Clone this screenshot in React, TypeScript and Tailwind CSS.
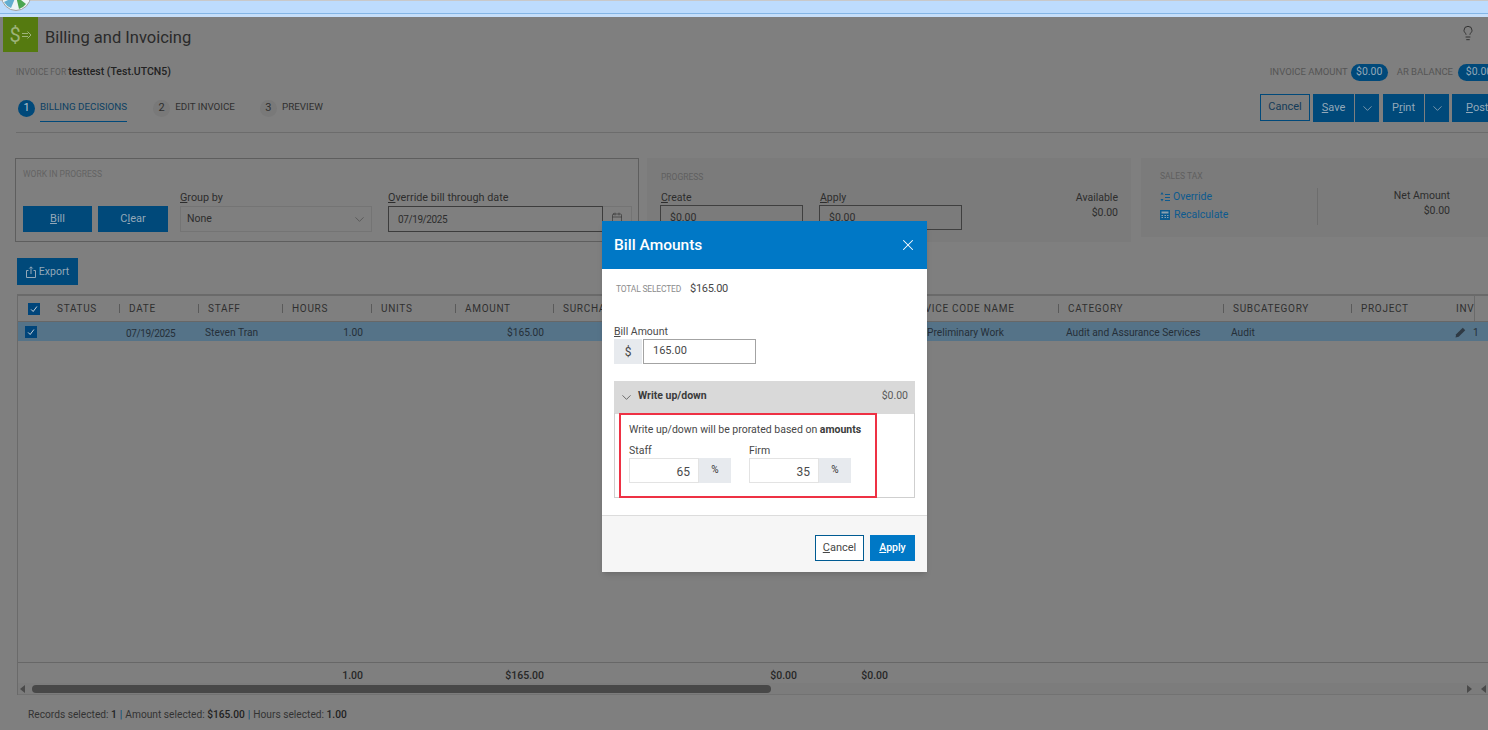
import { Calendar, ChevronDown, Lightbulb, X } from "lucide-react";

const COLS = [
  { label: "", w: "w-[30px]" },
  { label: "STATUS", w: "w-[71px]" },
  { label: "DATE", w: "w-[79px]" },
  { label: "STAFF", w: "w-[84px]" },
  { label: "HOURS", w: "w-[89px]" },
  { label: "UNITS", w: "w-[84px]" },
  { label: "AMOUNT", w: "w-[98px]" },
  { label: "SURCHARGE", w: "w-[110px]" },
  { label: "DISCOUNT", w: "w-[140px]" },
  { label: "WRITE UP", w: "w-[92px]" },
  { label: "SERVICE CODE NAME", w: "w-[163px]" },
  { label: "CATEGORY", w: "w-[165px]" },
  { label: "SUBCATEGORY", w: "w-[128px]" },
  { label: "PROJECT", w: "w-[96px]" },
  { label: "INV", w: "h-full w-[28px] overflow-hidden border-r border-[#6a6a6a]" },
];

function CheckBox() {
  return (
    <span className="flex h-[12px] w-[12px] items-center justify-center bg-[#00457a]">
      <svg viewBox="0 0 12 12" className="h-[10px] w-[10px]" fill="none" stroke="#c9d3da" strokeWidth="1.2">
        <path d="M2.5 6.5 5 9l4.5-6" />
      </svg>
    </span>
  );
}

function BlueButton({ children, className }: { children: React.ReactNode; className: string }) {
  return (
    <button className={`flex items-center justify-center bg-[#00497a] text-[11px] text-[#93a8b8] ${className}`}>
      {children}
    </button>
  );
}

function Step({ n, label, active }: { n: number; label: string; active?: boolean }) {
  return (
    <div className="flex items-center">
      <span
        className={`flex h-[17px] w-[17px] items-center justify-center rounded-full text-[11px] ${
          active ? "bg-[#00497a] text-[#b8c6d0]" : "bg-[#797979] text-[#2e2e2e]"
        }`}
      >
        {n}
      </span>
      <span
        className={`ml-[5px] flex h-[27px] items-center border-b pb-px text-[9.8px] ${
          active ? "border-[#00497a] text-[#0c3f63]" : "border-transparent text-[#2f2f2f]"
        }`}
      >
        {label}
      </span>
    </div>
  );
}

function PercentInput({ value }: { value: string }) {
  return (
    <div className="flex h-[25px]">
      <div className="flex w-[70px] items-center justify-end border border-[#e3e3e3] pr-[8px] pt-[2px] text-[12px] text-[#4a4a4a]">
        {value}
      </div>
      <div className="flex w-[32px] items-center justify-center bg-[#e7eaee] pb-[3px] text-[10px] text-[#333]">%</div>
    </div>
  );
}

function BillAmountsDialog() {
  return (
    <div className="absolute left-[602px] top-[221px] w-[325px] bg-white text-[#474747] shadow-md">
      <div className="flex h-[48px] items-center justify-between bg-[#0078c6] pl-[12px] pr-[10px] text-white">
        <span className="pt-[2px] text-[15.5px] font-medium">Bill Amounts</span>
        <X size={18} strokeWidth={1.4} />
      </div>
      <div className="px-[12px] pt-[13px]">
        <div className="flex h-[14px] items-center">
          <span className="ml-[2px] text-[8.5px] tracking-[-0.2px] text-[#8c8c8c]">TOTAL SELECTED</span>
          <span className="ml-[9px] text-[11px] tracking-[-0.3px]">$165.00</span>
        </div>
        <div className="mt-[29px] h-[14px] text-[10.5px] leading-[14px] text-[#4a4a4a]">
          <u>B</u>ill Amount
        </div>
        <div className="flex h-[25px]">
          <div className="flex w-[28px] items-center justify-center bg-[#e7eaee] text-[12px]">$</div>
          <div className="ml-[1px] flex w-[113px] items-center border border-[#a3a3a3] pl-[9px] text-[11px]">165.00</div>
        </div>
        <div className="mt-[17px] flex h-[33px] items-center bg-[#d9d9d9] pb-[3px] pl-[5px] pr-[7px] text-[10.5px]">
          <ChevronDown size={15} strokeWidth={1.2} className="mt-[3px]" />
          <span className="ml-[4px] font-bold text-[#3c3c3c]">Write up/down</span>
          <span className="ml-auto text-[#5a5a5a]">$0.00</span>
        </div>
        <div className="h-[85px] border border-t-0 border-[#cfcfcf]">
          <div className="-mt-px ml-[4px] h-[85px] w-[258px] border-2 border-[#ee3144] pl-[8px] pt-[8px] text-[10.5px]">
            <div className="h-[14px] leading-[14px]">
              Write up/down will be prorated based on <b className="text-[#3c3c3c]">amounts</b>
            </div>
            <div className="mt-[7px] flex gap-[18px]">
              <div>
                <div className="h-[14px] leading-[14px]">Staff</div>
                <PercentInput value="65" />
              </div>
              <div>
                <div className="h-[14px] leading-[14px]">Firm</div>
                <PercentInput value="35" />
              </div>
            </div>
          </div>
        </div>
      </div>
      <div className="mt-[17px] flex h-[57px] items-start justify-end gap-[6px] border-t border-[#dcdcdc] bg-[#f6f6f6] pr-[12px] pt-[19px]">
        <button className="flex h-[26px] w-[49px] items-center justify-center border border-[#005b92] bg-white text-[11px] text-[#474747]">
          <span><u>C</u>ancel</span>
        </button>
        <button className="flex h-[26px] w-[45px] items-center justify-center bg-[#0078c6] text-[10.5px] font-medium text-white">
          <span><u>A</u>pply</span>
        </button>
      </div>
    </div>
  );
}

export default function App() {
  return (
    <div className="relative h-[730px] w-[1488px] overflow-hidden bg-[#7f7f7f] font-['Roboto',sans-serif] text-[#2d2d2d]">
      {/* browser strip */}
      <div className="relative h-[17px] border-t border-[#c9c9c9] bg-[#bddcfd]">
        <div className="absolute bottom-[3px] left-0 right-0 h-px bg-[#84b6e6]" />
        <div className="absolute bottom-0 left-0 right-0 h-[3px] bg-[#c6dffa]" />
        <svg viewBox="0 0 30 30" className="absolute -top-[20px] left-px h-[30px] w-[30px]">
          <circle cx="15" cy="15" r="14.500" fill="#eef4f6" stroke="#a0a0a0" />
          <path d="M3 21 15 15l-5 12A14 14 0 0 1 3 21Z" fill="#63aed0" />
          <path d="m15 15 10 8a14 14 0 0 1-7 5Z" fill="#4ca650" />
        </svg>
      </div>

      <div className="w-[1510px]">
        {/* title */}
        <div className="flex h-[35px] pl-[3px] pr-[34px]">
          <div className="flex h-[35px] w-[35px] items-center justify-center bg-[#557a10] text-[#9db37a]">
            <span className="text-[20px] leading-none">$</span>
            <svg viewBox="0 0 10 8" className="ml-px h-[8px] w-[10px]" fill="none" stroke="currentColor">
              <path d="M0 2.500h6M0 5.500h6M5.500.5 9 4 5.500 7.500" />
            </svg>
          </div>
          <h1 className="ml-[7px] self-center pt-[7px] text-[16.5px] leading-none text-[#2a2a2a]">Billing and Invoicing</h1>
          <Lightbulb size={16} strokeWidth={1.4} className="ml-auto mt-[8px] text-[#2d2d2d]" />
        </div>

        {/* invoice for */}
        <div className="mt-[10px] flex h-[20px] items-center pl-[16px]">
          <span className="text-[8.500px] text-[#5a5a5a]">INVOICE FOR</span>
          <span className="ml-[2px] text-[10.500px] font-medium text-[#222]">testtest (Test.UTCN5)</span>
          <span className="ml-auto text-[9.500px] text-[#555]">INVOICE AMOUNT</span>
          <span className="ml-[3px] flex h-[17px] w-[37px] items-center justify-center rounded-full bg-[#00497a] text-[10.500px] text-[#93a8b8]">$0.00</span>
          <span className="ml-[9px] text-[9.500px] text-[#555]">AR BALANCE</span>
          <span className="ml-[5px] mr-[10px] flex h-[17px] w-[42px] items-center justify-center rounded-full bg-[#00497a] text-[10.500px] text-[#93a8b8]">$0.00</span>
        </div>

        {/* steps and actions */}
        <div className="mt-[12px] flex h-[28px] items-center pl-[18px]">
          <Step n={1} label="BILLING DECISIONS" active />
          <div className="ml-[26px]"><Step n={2} label="EDIT INVOICE" /></div>
          <div className="ml-[25px]"><Step n={3} label="PREVIEW" /></div>
          <div className="ml-auto flex h-[28px] items-stretch">
            <button className="mb-px w-[50px] border border-[#00497a] text-[11px] text-[#143b58]">Cancel</button>
            <BlueButton className="ml-[3px] w-[41px]"><span><u>S</u>ave</span></BlueButton>
            <BlueButton className="ml-px w-[24px]"><ChevronDown size={15} strokeWidth={1.3} /></BlueButton>
            <BlueButton className="ml-[4px] w-[41px]"><span>P<u>r</u>int</span></BlueButton>
            <BlueButton className="ml-px w-[24px]"><ChevronDown size={15} strokeWidth={1.3} /></BlueButton>
            <BlueButton className="ml-[3px] w-[58px] !justify-start pl-[14px]"><span><u>P</u>ost</span></BlueButton>
          </div>
        </div>
        <div className="ml-[16px] mt-[10px] h-px bg-[#6c6c6c]" />

        {/* panels */}
        <div className="mt-[25px] flex items-start pl-[15px]">
          <section className="h-[84px] w-[624px] border border-[#5e5e5e] pl-[7px] pt-[9px]">
            <div className="h-[12px] text-[8.500px] leading-[12px] text-[#636363]">WORK IN PROGRESS</div>
            <div className="mt-[11px] flex items-end">
              <BlueButton className="h-[26px] w-[69px]"><span><u>B</u>ill</span></BlueButton>
              <BlueButton className="ml-[6px] h-[26px] w-[70px]"><span>C<u>l</u>ear</span></BlueButton>
              <div className="ml-[12px]">
                <div className="mb-px h-[14px] text-[10.800px] leading-[14px]"><u>G</u>roup by</div>
                <div className="flex h-[26px] w-[192px] items-center justify-between border border-[#747474] pl-[6px] pr-[4px] text-[10.500px]">
                  None
                  <ChevronDown size={15} strokeWidth={1.2} className="text-[#4f4f4f]" />
                </div>
              </div>
              <div className="ml-[16px]">
                <div className="mb-px h-[14px] text-[10.800px] leading-[14px]"><u>O</u>verride bill through date</div>
                <div className="flex h-[26px]">
                  <div className="flex w-[215px] items-center border border-[#3c3c3c] pl-[9px] text-[10px] tracking-[-0.4px]">07/19/2025</div>
                  <div className="flex w-[29px] justify-center border border-l-0 border-[#747474] pt-[5px]">
                    <Calendar size={12} strokeWidth={1.4} className="text-[#3a3a3a]" />
                  </div>
                </div>
              </div>
            </div>
          </section>

          <section className="ml-[8px] flex h-[84px] w-[484px] bg-[#7b7b7b] pl-[13px] pr-[13px] pt-[13px]">
            <div>
              <div className="ml-px h-[12px] text-[8.500px] leading-[12px] text-[#5f5f5f]">PROGRESS</div>
              <div className="mt-[8px] flex gap-[16px]">
                <div>
                  <div className="ml-px h-[14px] text-[10.500px] leading-[14px]"><u>C</u>reate</div>
                  <div className="flex h-[25px] w-[143px] items-center border border-[#3f3f3f] pl-[9px] text-[10.500px]">$0.00</div>
                </div>
                <div>
                  <div className="ml-px h-[14px] text-[10.500px] leading-[14px]"><u>A</u>pply</div>
                  <div className="flex h-[25px] w-[143px] items-center border border-[#3f3f3f] pl-[9px] text-[10.500px]">$0.00</div>
                </div>
              </div>
            </div>
            <div className="ml-auto pt-[19px] text-right text-[10.500px] leading-[15px]">
              <div>Available</div>
              <div>$0.00</div>
            </div>
          </section>

          <section className="ml-[10px] flex h-[79px] w-[359px] bg-[#7b7b7b] pl-[19px] pt-[12px]">
            <div className="w-[157px]">
              <div className="h-[12px] text-[8.500px] leading-[12px] text-[#5f5f5f]">SALES TAX</div>
              <div className="mt-[6px] flex h-[18px] items-center text-[10.500px] text-[#0d5a8f]">
                <svg viewBox="0 0 10 10" className="h-[10px] w-[10px]" fill="#0d5a8f">
                  <path d="M2 0 3.500 2.500h-3ZM.5 7h3L2 9.500ZM5 2h5v1H5ZM5 5h5v1H5ZM5 8h5v1H5Z" />
                </svg>
                <span className="ml-[3px]">Override</span>
              </div>
              <div className="flex h-[18px] items-center text-[10.500px] text-[#0d5a8f]">
                <svg viewBox="0 0 10 10" className="h-[10px] w-[10px]">
                  <path d="M0 0h10v10H0Z" fill="#0d5a8f" />
                  <path d="M1.500 1.500h7v2h-7ZM1.500 5h1.500v1H1.500ZM4.500 5h1.500v1H4.500ZM7 5h1.500v1H7ZM1.500 7h1.500v1H1.500ZM4.500 7h1.500v1H4.500ZM7 7h1.500v1H7Z" fill="#8aa0b0" />
                </svg>
                <span className="ml-[4px]">Recalculate</span>
              </div>
            </div>
            <div className="mt-[18px] h-[37px] w-px bg-[#6d6d6d]" />
            <div className="w-[132px] pt-[18px] text-right text-[10.500px] leading-[15px]">
              <div>Net Amount</div>
              <div>$0.00</div>
            </div>
          </section>
        </div>

        {/* export */}
        <div className="mt-[16px] pl-[17px]">
          <BlueButton className="h-[27px] w-[61px]">
            <svg viewBox="0 0 10 12" className="h-[12px] w-[10px]" fill="none" stroke="#93a8b8">
              <path d="M2.500 4.500H.5v7h9v-7h-2M5 8V1M3.300 2.500 5 .8l1.700 1.700" />
            </svg>
            <span className="ml-[3px] text-[10.500px]">Export</span>
          </BlueButton>
        </div>

        {/* grid */}
        <div className="ml-[17px] mt-[9px] flex h-[401px] flex-col border-l border-t-2 border-[#6a6a6a] text-[10.200px]">
          <div className="flex h-[26px] items-center border-b border-[#676767]">
            {COLS.map((c, i) => (
              <div key={c.label} className={`flex shrink-0 items-center ${c.w}`}>
                {i === 0 ? (
                  <span className="ml-[10px]"><CheckBox /></span>
                ) : (
                  <>
                    {i > 1 && <span className="mr-[9px] h-[9px] w-px bg-[#5a5a5a]" />}
                    <span className={`pb-px text-[10px] tracking-[0.7px] text-[#2f2f2f] ${i === 1 ? "ml-[9px]" : ""}`}>{c.label}</span>
                  </>
                )}
              </div>
            ))}
          </div>
          <div className="flex h-[19px] items-center bg-[#557388] text-[#252f38]">
            <div className="w-[30px] shrink-0 pl-[7px]"><CheckBox /></div>
            <div className="w-[71px] shrink-0" />
            <div className="w-[79px] shrink-0 pl-[7px] pt-[3px] text-[10px] tracking-[-0.4px]">07/19/2025</div>
            <div className="w-[84px] shrink-0 pl-[7px] pt-[3px]">Steven Tran</div>
            <div className="w-[89px] shrink-0 pr-[8px] pt-[3px] text-right">1.00</div>
            <div className="w-[84px] shrink-0" />
            <div className="w-[98px] shrink-0 pr-[9px] pt-[3px] text-right">$165.00</div>
            <div className="w-[342px] shrink-0" />
            <div className="w-[163px] shrink-0 pl-[32px] pt-[3px]">Preliminary Work</div>
            <div className="w-[165px] shrink-0 pl-[8px] pt-[3px]">Audit and Assurance Services</div>
            <div className="w-[128px] shrink-0 pl-[8px] pt-[3px]">Audit</div>
            <div className="w-[96px] shrink-0" />
            <div className="flex shrink-0 items-center pl-[8px] pt-[3px]">
              <svg viewBox="0 0 12 12" className="h-[11px] w-[11px]" fill="#2f3a44">
                <path d="M8.500.8 11.200 3.500 4 10.700.6 11.400 1.300 8Z" />
              </svg>
              <span className="ml-[7px]">1</span>
            </div>
          </div>
          <div className="flex-1 border-b border-[#676767]" />
          <div className="flex h-[20px] items-center pt-[6px] text-[10.500px] font-medium text-[#272727]">
            <div className="w-[345px] shrink-0 text-right">1.00</div>
            <div className="w-[181px] shrink-0 text-right">$165.00</div>
            <div className="w-[253px] shrink-0 text-right">$0.00</div>
            <div className="w-[91px] shrink-0 text-right">$0.00</div>
          </div>
          <div className="flex h-[12px] items-center border-b border-[#727272] bg-[#7c7c7c]">
            <span className="ml-[2px] h-0 w-0 border-y-[4px] border-r-[5px] border-y-transparent border-r-[#4a4a4a]" />
            <div className="ml-[7px] h-[8px] w-[739px] rounded-[4px] bg-[#484848]" />
            <span className="ml-[696px] h-0 w-0 border-y-[4px] border-l-[5px] border-y-transparent border-l-[#4a4a4a]" />
            <span className="ml-[9px] h-0 w-0 border-y-[4px] border-r-[5px] border-y-transparent border-r-[#4a4a4a]" />
          </div>
        </div>

        {/* selection summary */}
        <div className="mt-[12px] flex h-[16px] items-center gap-[3px] pl-[28px] text-[10.200px] text-[#333]">
          <span>Records selected: <b className="font-medium text-[#222]">1</b></span>
          <span className="text-[#00497a]">|</span>
          <span>Amount selected: <b className="font-medium text-[#222]">$165.00</b></span>
          <span className="text-[#00497a]">|</span>
          <span>Hours selected: <b className="font-medium text-[#222]">1.00</b></span>
        </div>
      </div>

      <BillAmountsDialog />
    </div>
  );
}
